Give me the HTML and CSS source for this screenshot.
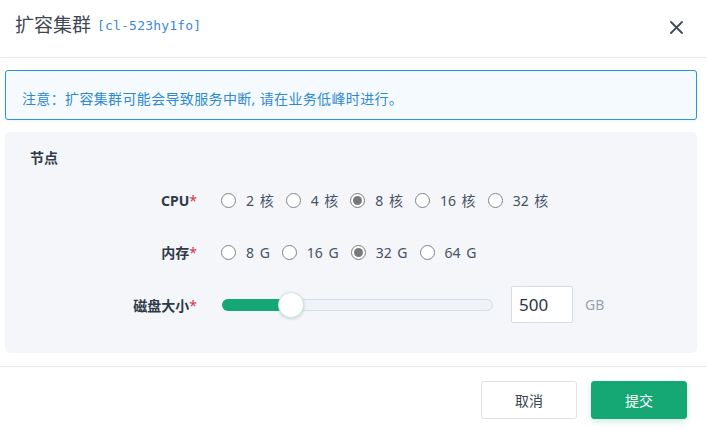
FILE: index.html
```html
<!DOCTYPE html>
<html lang="zh">
<head>
<meta charset="utf-8">
<title>扩容集群</title>
<link rel="stylesheet" href="styles.css">
</head>
<body>
<div class="modal">
  <div class="header">
    <span class="title">扩容集群</span>
    <span class="cluster-id">[cl-523hy1fo]</span>
    <svg class="close" width="13" height="13" viewBox="0 0 13 13"><path d="M1 1L12 12M12 1L1 12" stroke="#3d4b5c" stroke-width="1.8" stroke-linecap="round"/></svg>
  </div>
  <div class="alert">注意：扩容集群可能会导致服务中断, 请在业务低峰时进行。</div>
  <div class="panel">
    <div class="section-title">节点</div>
    <div class="row row-cpu">
      <div class="label">CPU<span class="req">*</span></div>
      <div class="radios">
        <label class="radio"><span class="dot"></span><span class="txt">2 核</span></label>
        <label class="radio"><span class="dot"></span><span class="txt">4 核</span></label>
        <label class="radio checked"><span class="dot"></span><span class="txt">8 核</span></label>
        <label class="radio"><span class="dot"></span><span class="txt">16 核</span></label>
        <label class="radio"><span class="dot"></span><span class="txt">32 核</span></label>
      </div>
    </div>
    <div class="row row-mem">
      <div class="label">内存<span class="req">*</span></div>
      <div class="radios">
        <label class="radio"><span class="dot"></span><span class="txt">8 G</span></label>
        <label class="radio"><span class="dot"></span><span class="txt">16 G</span></label>
        <label class="radio checked"><span class="dot"></span><span class="txt">32 G</span></label>
        <label class="radio"><span class="dot"></span><span class="txt">64 G</span></label>
      </div>
    </div>
    <div class="row row-disk">
      <div class="label">磁盘大小<span class="req">*</span></div>
      <div class="disk">
        <div class="slider">
          <div class="fill" style="width:69px"></div>
          <div class="thumb" style="left:55px"></div>
        </div>
        <div class="num-input">500</div>
        <span class="unit">GB</span>
      </div>
    </div>
  </div>
  <div class="footer">
    <button class="btn btn-cancel">取消</button>
    <button class="btn btn-submit">提交</button>
  </div>
</div>
</body>
</html>
```
FILE: styles.css
```css
* { box-sizing: border-box; }
html, body { margin: 0; padding: 0; background: #fff; }
body {
  font-family: "Noto Sans", "Noto Sans CJK SC", sans-serif;
  color: #3e4a5a;
  width: 707px;
  height: 430px;
  overflow: hidden;
}
.header {
  display: flex;
  align-items: center;
  height: 58px;
  padding: 0 24px 7px 15px;
  border-bottom: 1px solid #e6e9ee;
}
.title {
  font-size: 19px;
  color: #3f4754;
  line-height: 26px;
}
.cluster-id {
  font-family: "DejaVu Sans Mono", "Liberation Mono", monospace;
  font-size: 13px;
  color: #3a8ad8;
  margin-left: 6px;
  margin-top: 1px;
  letter-spacing: 0.2px;
}
.close {
  margin-left: auto;
  margin-top: 4px;
}
.alert {
  margin: 12px 10px 0 5px;
  height: 50px;
  padding: 18px 16px 0;
  line-height: 20px;
  font-size: 14px;
  letter-spacing: 0.35px;
  color: #2e8ad0;
  background: #f5fafe;
  border: 1px solid #2b95d8;
  border-radius: 3px;
  box-shadow: 0 1px 3px rgba(0,0,0,0.06);
}
.panel {
  margin: 12px 10px 0 5px;
  height: 221px;
  background: #f4f6fa;
  border-radius: 5px;
  padding: 16px 0 0 25px;
}
.section-title {
  font-size: 14px;
  font-weight: bold;
  line-height: 20px;
  color: #2f3a48;
}
.row {
  display: grid;
  grid-template-columns: 167px 1fr;
  column-gap: 24px;
  align-items: center;
}
.row-cpu { margin-top: 16px; height: 32px; }
.row-mem { margin-top: 20px; height: 32px; }
.row-disk { margin-top: 18px; height: 37px; }
.label {
  text-align: right;
  font-size: 14px;
  font-weight: bold;
  color: #2f3a48;
}
.req { color: #d8363c; font-weight: normal; }
.radios { display: flex; align-items: center; }
.radio {
  display: flex;
  align-items: center;
  margin-right: 12px;
  font-size: 14px;
  color: #465265;
}
.dot {
  width: 15px;
  height: 15px;
  border: 1px solid #7f848b;
  border-radius: 50%;
  background: #fff;
  margin-right: 10px;
  display: flex;
  align-items: center;
  justify-content: center;
}
.radio.checked .dot { border-color: #7a7c80; }
.radio.checked .dot::after {
  content: "";
  width: 9px;
  height: 9px;
  border-radius: 50%;
  background: #797979;
}
.txt { word-spacing: 2px; }
.disk { display: flex; align-items: center; }
.slider {
  position: relative;
  width: 271px;
  height: 12px;
  margin-left: 1px;
  background: #eff2f7;
  border: 1px solid #d6dce5;
  border-radius: 6px;
}
.fill {
  height: 12px;
  margin: -1px 0 0 -1px;
  background: #16a874;
  border-radius: 6px 0 0 6px;
}
.thumb {
  position: absolute;
  top: -8px;
  width: 26px;
  height: 26px;
  border-radius: 50%;
  background: #fff;
  border: 1px solid #d5e4e0;
  box-shadow: 0 1px 3px rgba(20,120,90,0.25);
}
.num-input {
  margin-left: 18px;
  width: 62px;
  height: 37px;
  background: #fff;
  border: 1px solid #d6dce5;
  border-radius: 2px;
  font-size: 17px;
  line-height: 35px;
  padding-left: 7px;
  color: #2b3544;
}
.unit {
  margin-left: 12px;
  font-size: 14px;
  color: #9aa3af;
}
.footer {
  margin-top: 13px;
  border-top: 1px solid #e6e9ee;
  padding: 14px 20px 0;
  display: flex;
  justify-content: flex-end;
  gap: 14px;
}
.btn {
  width: 96px;
  height: 38px;
  border-radius: 3px;
  font-family: "Noto Sans", "Noto Sans CJK SC", sans-serif;
  font-size: 14px;
  cursor: pointer;
}
.btn-cancel {
  background: #fff;
  border: 1px solid #dde2ea;
  color: #3b4452;
}
.btn-submit {
  background: #16a874;
  border: 1px solid #16a874;
  color: #fff;
  box-shadow: 0 3px 6px rgba(22,168,116,0.2);
}
```
